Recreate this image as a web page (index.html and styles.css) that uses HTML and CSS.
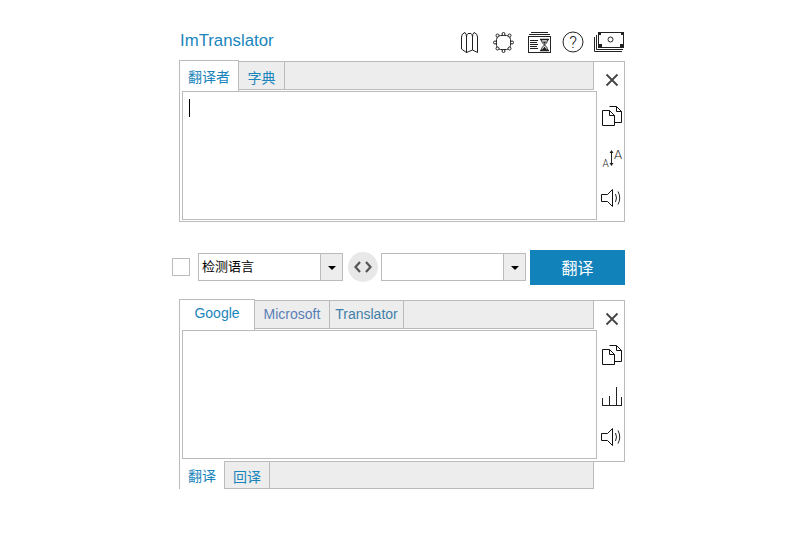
FILE: index.html
```html
<!DOCTYPE html>
<html lang="en">
<head>
    <meta charset="UTF-8">
    <title>ImTranslator</title>
    <link rel="stylesheet" href="styles.css">
</head>
<body>
    <div class="app">
        <div class="header">
            <div class="logo">ImTranslator</div>
            <div class="header-icons">
                <svg class="ico-map" width="17" height="21" viewBox="0 0 17 21"><path d="M.5 5Q.5 1.500 4 .5Q5.500 2 5.500 5V20.500L.5 17ZM5.500 5Q5.500 2.500 7 1.500H10Q11.500 2.500 11.500 5V18L5.500 20.500ZM11.500 5Q11.500 2 13 .5Q16.500 1.500 16.500 5V20.500L11.500 18" fill="none" stroke="#222"/></svg>
                <svg class="ico-gear" width="21" height="21" viewBox="0 0 21 21"><rect x="3.500" y="3.500" width="14" height="14" rx="4" fill="none" stroke="#222"/><g fill="#fff" stroke="#222"><circle cx="10.500" cy="2" r="1.500"/><circle cx="4.500" cy="3.500" r="1.500"/><circle cx="16.500" cy="3.500" r="1.500"/><circle cx="2" cy="10.500" r="1.500"/><circle cx="19" cy="10.500" r="1.500"/><circle cx="4.500" cy="16.500" r="1.500"/><circle cx="16.500" cy="16.500" r="1.500"/><circle cx="10.500" cy="19" r="1.500"/></g></svg>
                <svg class="ico-news" width="25" height="21" viewBox="0 0 25 21"><path d="M4 .5H21M2 2.500H23" fill="none" stroke="#222"/><rect x="1.500" y="4.500" width="22" height="16" fill="none" stroke="#222"/><path d="M3 8.500H11M3 10.500H10M3 12.500H11M3 14.500H10M3 16.500H11" stroke="#222"/><path d="M13 7.500H22M13 18.500H22" stroke="#222" stroke-width="1.500"/><path d="M14.500 8Q14.500 11 17.500 13Q14.500 15 14.500 18M20.500 8Q20.500 11 17.500 13Q20.500 15 20.500 18" fill="none" stroke="#222"/><path d="M15 18L17.500 14.500L20 18ZM15.500 9.500H19.500L17.500 12Z" fill="#222"/></svg>
                <svg class="ico-help" width="22" height="22" viewBox="0 0 22 22"><circle cx="11" cy="11" r="10" fill="none" stroke="#222"/><text x="11" y="17" text-anchor="middle" class="ico-text help-mark">?</text></svg>
                <svg class="ico-money" width="31" height="21" viewBox="0 0 31 21"><rect x="4.500" y=".5" width="25" height="15" fill="none" stroke="#222"/><path d="M2.500 3V17.500H29M.5 5V19.500H28" fill="none" stroke="#222"/><path d="M5 12H8V15H5ZM26 12H29V15H26ZM5 1H7V3H5ZM27 1H29V3H27Z" fill="#222"/><circle cx="16.500" cy="7.500" r="2.500" fill="none" stroke="#222"/></svg>
            </div>
        </div>

        <div class="panel">
            <div class="panel-main">
                <div class="tabs">
                    <div class="tab active">翻译者</div>
                    <div class="tab tab-dict">字典</div>
                    <div class="tab-rest"></div>
                </div>
                <div class="textbox"><span class="caret"></span></div>
            </div>
            <div class="side">
                <div class="side-btn side-close"><svg width="14" height="14" viewBox="0 0 14 14"><path d="M1.500 1.500L12.500 12.500M12.500 1.500L1.500 12.500" stroke="#444" stroke-width="1.800"/></svg></div>
                <div class="side-btn side-copy"><svg width="20" height="20" viewBox="0 0 20 20"><path d="M7.500 .5H14.500L19.500 5.500V16.500H12.500" fill="#fff" stroke="#111"/><path d="M14.500 .5V5.500H19.500" fill="none" stroke="#111"/><path d="M.5 4.500H7.500L12.500 9.500V19.500H.5Z" fill="#fff" stroke="#111"/><path d="M7.500 4.500V9.500H12.500" fill="none" stroke="#111"/></svg></div>
                <div class="side-btn"><svg width="22" height="22" viewBox="0 0 22 22"><text x="1.500" y="20" class="ico-text small-a">A</text><text x="13" y="12" class="ico-text big-a">A</text><path d="M10.500 4V18" stroke="#222"/><path d="M8.500 6L10.500 3L12.500 6ZM8.500 16L10.500 19L12.500 16Z" fill="#222"/></svg></div>
                <div class="side-btn"><svg width="22" height="20" viewBox="0 0 22 20"><path d="M.5 6.500H6.500L11.500 1.500V18.500L6.500 13.500H.5Z" fill="none" stroke="#111"/><path d="M14.500 6Q16.500 10 14.500 14M17 3.500Q20.500 10 17 16.500" fill="none" stroke="#222"/></svg></div>
            </div>
        </div>

        <div class="controls">
            <div class="check"></div>
            <div class="select"><div class="select-value">检测语言</div><div class="select-arrow"></div></div>
            <div class="swap"><svg width="18" height="12" viewBox="0 0 18 12"><path d="M6 1L1.500 6L6 11M12 1L16.500 6L12 11" fill="none" stroke="#555" stroke-width="2.200"/></svg></div>
            <div class="select"><div class="select-value"></div><div class="select-arrow"></div></div>
            <div class="go">翻译</div>
        </div>

        <div class="panel panel-result">
            <div class="panel-main">
                <div class="tabs">
                    <div class="tab active tab-google">Google</div>
                    <div class="tab tab-ms">Microsoft</div>
                    <div class="tab tab-tr">Translator</div>
                    <div class="tab-rest"></div>
                </div>
                <div class="textbox"></div>
            </div>
            <div class="side">
                <div class="side-btn side-close"><svg width="14" height="14" viewBox="0 0 14 14"><path d="M1.500 1.500L12.500 12.500M12.500 1.500L1.500 12.500" stroke="#444" stroke-width="1.800"/></svg></div>
                <div class="side-btn side-copy"><svg width="20" height="20" viewBox="0 0 20 20"><path d="M7.500 .5H14.500L19.500 5.500V16.500H12.500" fill="#fff" stroke="#111"/><path d="M14.500 .5V5.500H19.500" fill="none" stroke="#111"/><path d="M.5 4.500H7.500L12.500 9.500V19.500H.5Z" fill="#fff" stroke="#111"/><path d="M7.500 4.500V9.500H12.500" fill="none" stroke="#111"/></svg></div>
                <div class="side-btn"><svg width="22" height="20" viewBox="0 0 22 20"><path d="M1 18.500H21M1.500 18V11M8.500 18V9M15.500 18V0M20.500 18V10" fill="none" stroke="#222"/></svg></div>
                <div class="side-btn"><svg width="22" height="20" viewBox="0 0 22 20"><path d="M.5 6.500H6.500L11.500 1.500V18.500L6.500 13.500H.5Z" fill="none" stroke="#111"/><path d="M14.500 6Q16.500 10 14.500 14M17 3.500Q20.500 10 17 16.500" fill="none" stroke="#222"/></svg></div>
            </div>
        </div>

        <div class="bottom-tabs">
            <div class="tab active">翻译</div>
            <div class="tab tab-back">回译</div>
            <div class="tab-rest"></div>
        </div>
    </div>
</body>
</html>
```

FILE: styles.css
```css
body {
    margin: 0;
    background-color: #fff;
    font-family: "Liberation Sans", "Noto Sans CJK SC", sans-serif;
    color: #1a85bb;
}
.app {
    width: 453px;
    margin-left: 172px;
}
.header {
    display: flex;
    justify-content: space-between;
    align-items: center;
    height: 61px;
    padding: 20px 0 0 8px;
    box-sizing: border-box;
}
.logo {
    font-size: 16.8px;
}
.header-icons {
    display: flex;
    align-items: center;
    margin-top: 3px;
}
.ico-gear {
    margin-left: 15px;
}
.ico-news {
    margin-left: 13px;
}
.ico-help,
.ico-money {
    margin-left: 10px;
}
.ico-text {
    font-family: Roboto, "Liberation Sans", sans-serif;
    font-weight: 300;
    fill: #222;
}
.help-mark {
    font-size: 17px;
}
.small-a {
    font-size: 10px;
}
.big-a {
    font-size: 13px;
}
.panel {
    display: flex;
    box-sizing: border-box;
    width: 446px;
    height: 161px;
    margin-left: 7px;
    border: 1px solid #bbb;
}
.panel-result {
    height: 162px;
}
.panel-main {
    width: 417px;
}
.tabs {
    display: flex;
    width: 414px;
    height: 29px;
    margin-top: -1px;
}
.bottom-tabs {
    display: flex;
    width: 415px;
    height: 27px;
    margin-left: 7px;
}
.tab {
    box-sizing: border-box;
    height: 29px;
    padding-top: 5px;
    border: 1px solid #bbb;
    border-left: none;
    background-color: #ededed;
    font-size: 14px;
    text-align: center;
    white-space: nowrap;
}
.tabs .active {
    width: 60px;
    height: 31px;
    margin: -1px 0 0 -1px;
    border-left: 1px solid #bbb;
    border-bottom: none;
    background-color: #fff;
    position: relative;
}
.tab-dict {
    width: 46px;
}
.tabs .tab-google {
    width: 76px;
}
.tab-ms {
    width: 75px;
    color: #5a7fb8;
}
.tab-tr {
    width: 74px;
    color: #3f7fa8;
}
.tab-rest {
    flex: 1;
    box-sizing: border-box;
    border: 1px solid #bbb;
    border-left: none;
    background-color: #ededed;
}
.bottom-tabs .tab {
    height: 27px;
    border-top: none;
    padding-top: 4px;
}
.bottom-tabs .active {
    flex: none;
    width: 46px;
    height: 29px;
    margin-top: -1px;
    border-left: 1px solid #bbb;
    border-bottom: 1px solid #bbb;
    background-color: #fff;
    position: relative;
}
.bottom-tabs .tab-back {
    width: 45px;
}
.bottom-tabs .tab-rest {
    border-top: none;
}
.textbox {
    box-sizing: border-box;
    width: 415px;
    height: 129px;
    margin: 1px 0 0 2px;
    border: 1px solid #bbb;
    background-color: #fff;
    position: relative;
}
.caret {
    display: block;
    width: 1px;
    height: 18px;
    margin: 7px 0 0 6px;
    background-color: #000;
}
.side {
    flex: 1;
    display: flex;
    flex-direction: column;
    padding-left: 3px;
}
.side-btn {
    display: flex;
    justify-content: center;
    align-items: center;
    height: 40px;
}
.side-close,
.side-copy {
    height: 36px;
}
.side-copy + .side-btn {
    margin-top: 4px;
}
.controls {
    display: flex;
    align-items: flex-start;
    height: 35px;
    margin: 28px 0 15px;
}
.check {
    box-sizing: border-box;
    width: 18px;
    height: 18px;
    margin: 8px 8px 0 0;
    border: 1px solid #bbb;
}
.select {
    display: flex;
    box-sizing: border-box;
    width: 145px;
    height: 28px;
    margin-top: 3px;
    border: 1px solid #bbb;
}
.select-value {
    flex: 1;
    padding-left: 3px;
    font-size: 13px;
    line-height: 26px;
    color: #000;
}
.select-arrow {
    width: 21px;
    border-left: 1px solid #bbb;
    background-color: #ededed;
    position: relative;
}
.select-arrow::after {
    content: "";
    position: absolute;
    left: 7px;
    top: 12px;
    border: 4px solid transparent;
    border-top: 4px solid #000;
    border-bottom: none;
}
.swap {
    display: flex;
    justify-content: center;
    align-items: center;
    width: 30px;
    height: 30px;
    margin: 2px 3px 0 5px;
    border-radius: 50%;
    background-color: #e8e8e8;
}
.go {
    width: 95px;
    height: 35px;
    margin-left: 4px;
    background-color: #1282ba;
    color: #fff;
    font-size: 16px;
    line-height: 37px;
    text-align: center;
}
```
